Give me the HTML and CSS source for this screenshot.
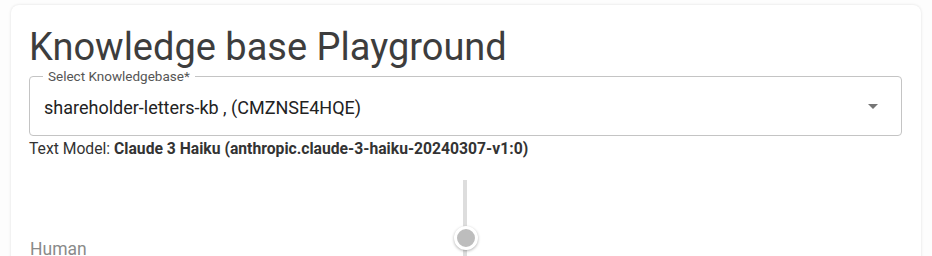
FILE: index.html
```html
<!DOCTYPE html>
<html>
<head>
<meta charset="utf-8">
<link rel="stylesheet" href="styles.css">
</head>
<body>
<div class="card">
  <h1 class="title">Knowledge base Playground</h1>
  <div class="field">
    <span class="field-label">Select Knowledgebase*</span>
    <span class="field-value">shareholder-letters-kb , (CMZNSE4HQE)</span>
    <svg class="arrow" width="24" height="24" viewBox="0 0 24 24"><path d="M7 10l5 5 5-5z" fill="#757575"/></svg>
  </div>
  <div class="model">Text Model: <b>Claude 3 Haiku (anthropic.claude-3-haiku-20240307-v1:0)</b></div>
  <div class="chat">
    <div class="slider"><div class="track"></div><div class="thumb"></div></div>
    <div class="human">Human</div>
  </div>
</div>
</body>
</html>
```
FILE: styles.css
```css
html, body { margin: 0; padding: 0; background: #fdfdfd; }
body { font-family: Roboto, "Liberation Sans", sans-serif; padding: 5px 11px 0 11px; height: 256px; overflow: hidden; box-sizing: border-box; }
.card {
  background: #fff;
  border-radius: 8px;
  box-shadow: 0 0 3px rgba(0,0,0,0.12);
  padding: 18px 19px 0 18px;
  height: 262px;
  box-sizing: border-box;
}
.title {
  margin: 0;
  font-weight: 400;
  font-size: 38px;
  line-height: 48px;
  color: #3d3d3d;
}
.field {
  position: relative;
  margin-top: 5px;
  height: 60px;
  border: 1px solid #c4c4c4;
  border-radius: 4px;
  display: flex;
  align-items: center;
  padding: 0 14px;
  box-sizing: border-box;
}
.field-label {
  position: absolute;
  left: 13px;
  top: -9px;
  background: #fff;
  padding: 0 5px;
  font-size: 13.5px;
  line-height: 16px;
  color: #555;
}
.field-value {
  flex: 1;
  font-size: 18px;
  color: #222;
  padding-top: 2px;
}
.arrow { margin-right: 2px; }
.model {
  margin-top: 2px;
  font-size: 15.7px;
  line-height: 22px;
  color: #333;
}
.model b { font-weight: 700; }
.chat { position: relative; height: 100px; }
.slider { position: absolute; left: 424px; top: 20px; width: 24px; height: 80px; }
.track { position: absolute; left: 10px; top: 0; width: 4px; height: 100%; background: #ddd; }
.thumb {
  position: absolute; left: 1px; top: 46px; width: 18px; height: 18px;
  border-radius: 50%; background: #bdbdbd; border: 3px solid #fff;
  box-shadow: 0 1px 3px rgba(0,0,0,0.3);
}
.human { position: absolute; left: 1px; top: 79px; font-size: 17.5px; line-height: 20px; color: #8a8a8a; }
```
